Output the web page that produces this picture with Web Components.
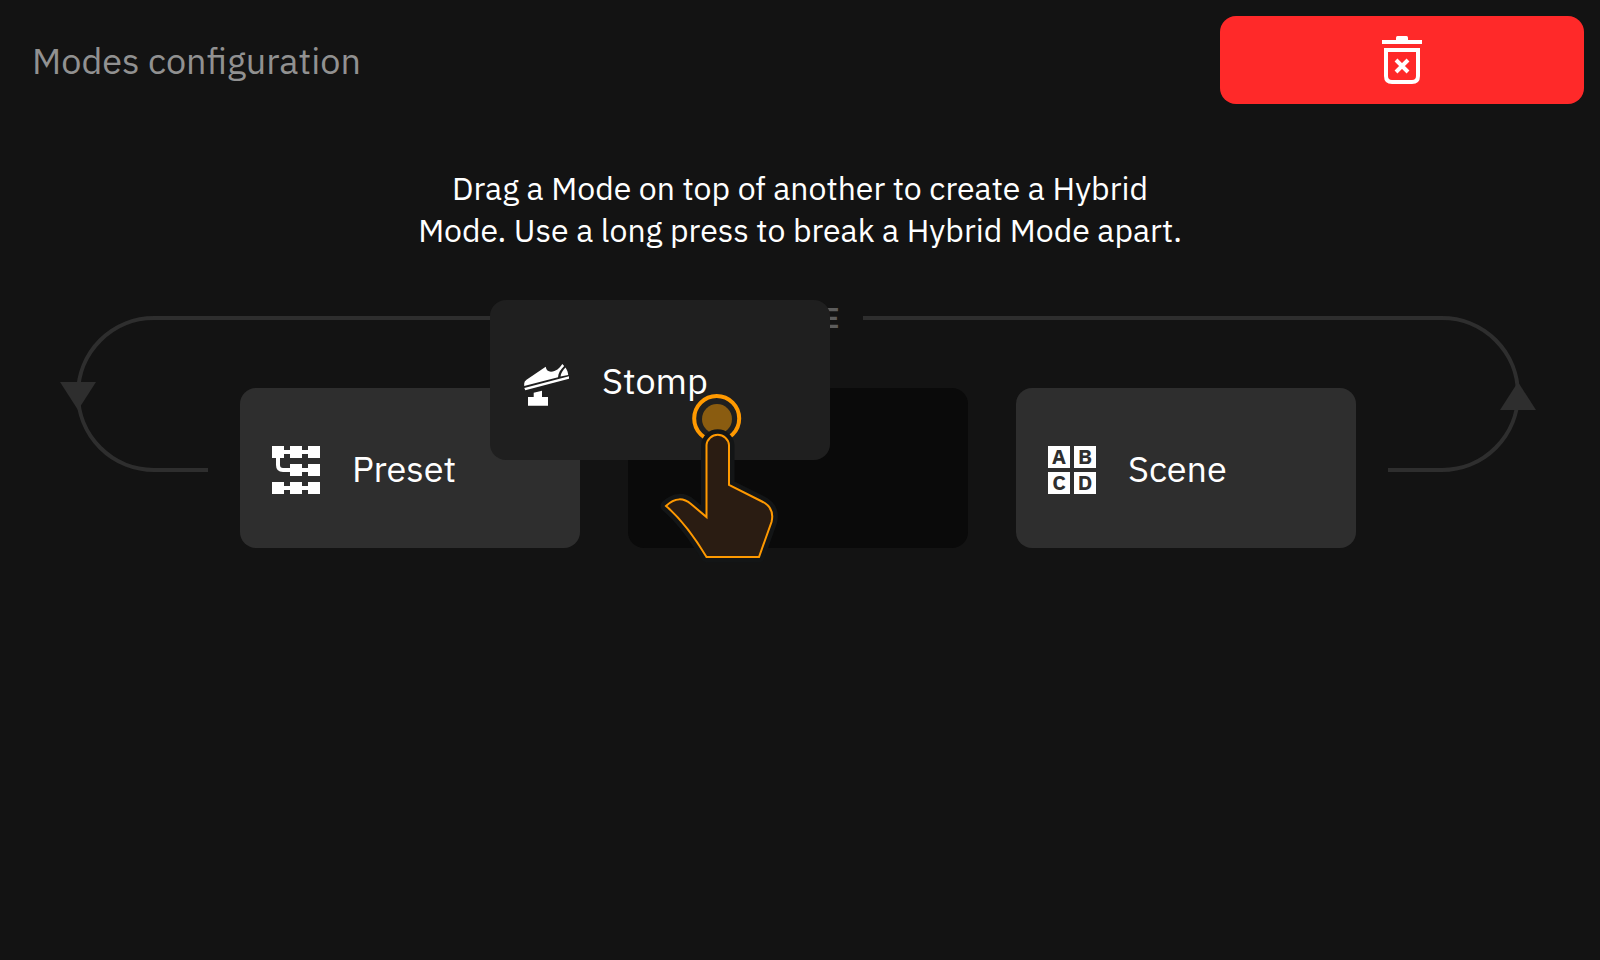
<!DOCTYPE html>
<html lang="en">
<head>
<meta charset="utf-8">
<title>Modes configuration</title>
<style>
  body {
    margin: 0;
    background: #131313;
    color: #fff;
    font-family: "IBM Plex Sans", "Open Sans", "Noto Sans", sans-serif;
  }

  svg {
    overflow: visible;
  }
</style>
</head>
<body>
<modes-page>
  <page-header slot="header" heading="Modes configuration">
    <delete-button></delete-button>
  </page-header>
  <span slot="hint">Drag a Mode on top of another to create a Hybrid<br>Mode. Use a long press to break a Hybrid Mode apart.</span>
  <mode-loop slot="loop" label="MODE">
    <mode-card label="Preset">
      <svg width="48" height="48" viewBox="0 0 48 48" fill="#fff" aria-hidden="true">
        <path d="M0 0h12v12H0zM18 0h12v12H18zM36 0h12v12H36zM18 18h12v12H18zM36 18h12v12H36zM0 36h12v12H0zM18 36h12v12H18zM36 36h12v12H36z"/>
        <path d="M12 6h24M18 24h18M12 42h24M6 12v7q0 5 5 5h7" fill="none" stroke="#fff" stroke-width="4"/>
      </svg>
    </mode-card>
    <mode-slot>
      <mode-card label="Stomp" dragging>
        <svg width="48" height="48" viewBox="0 0 48 48" fill="#fff" aria-hidden="true">
          <path d="M2.200 28V25.500Q2.200 23.500 4.500 21.800L23.700 8.700Q24.500 13.500 29 13.700C34 13.500 37.500 10.500 40.300 6L42.200 8C38.500 11.500 36.300 15 36 19.200Z"/>
          <path d="M43.500 9.500C45.200 12 46 14.500 46.200 17L38.500 18.600C38.800 15 41 12 43.500 9.500Z"/>
          <path d="M2.300 30L47 18.300V20.700L3.300 32.300ZM11.700 34.700L20 32.700V39H26V47.700H6V39H11.700Z"/>
        </svg>
      </mode-card>
      <touch-hand></touch-hand>
    </mode-slot>
    <mode-card label="Scene">
      <svg width="48" height="48" viewBox="0 0 48 48" fill="#fff" aria-hidden="true">
        <path d="M0 0h22v22H0zM26 0h22v22H26zM0 26h22v22H0zM26 26h22v22H26z"/>
        <g fill="#2e2e2e" font-size="21" font-weight="700" text-anchor="middle">
          <text x="11" y="18">A</text>
          <text x="37" y="18">B</text>
          <text x="11" y="44">C</text>
          <text x="37" y="44">D</text>
        </g>
      </svg>
    </mode-card>
  </mode-loop>
</modes-page>

<script>
// page shell: header, hint, loop
class ModesPage extends HTMLElement {
  constructor() {
    super();
    this.attachShadow({mode: 'open'});
    this.shadowRoot.innerHTML = `
      <style>
        :host {
          display: block;
          min-height: 100vh;
        }

        .hint {
          font-size: 32px;
          line-height: 42px;
          margin: 0;
          padding: 63px 16px 51px;
          text-align: center;
        }
      </style>
      <slot name="header"></slot>
      <main>
        <p class="hint"><slot name="hint"></slot></p>
        <slot name="loop"></slot>
      </main>
    `;
  }
}

// title on the left, actions on the right
class PageHeader extends HTMLElement {
  constructor() {
    super();
    this.attachShadow({mode: 'open'});
    this.shadowRoot.innerHTML = `
      <style>
        :host {
          align-items: center;
          display: flex;
          justify-content: space-between;
          padding: 16px 16px 0 32px;
        }

        h1 {
          color: #919191;
          font-size: 36px;
          font-weight: 400;
          line-height: 48px;
          margin: 0;
          padding-top: 2px;
        }
      </style>
      <h1></h1>
      <slot></slot>
    `;
    this.shadowRoot.querySelector('h1').textContent = this.getAttribute('heading');
  }
}

class DeleteButton extends HTMLElement {
  constructor() {
    super();
    this.attachShadow({mode: 'open'});
    this.shadowRoot.innerHTML = `
      <style>
        :host {
          display: block;
          flex: 0 1 364px;
        }

        button {
          align-items: center;
          background: #ff2929;
          border: none;
          border-radius: 16px;
          cursor: pointer;
          display: flex;
          height: 88px;
          justify-content: center;
          padding: 0;
          width: 100%;
        }
      </style>
      <button type="button" aria-label="Delete">
        <svg width="48" height="48" viewBox="0 0 48 48" fill="none" stroke="#fff" stroke-width="4" aria-hidden="true">
          <path d="M4 6H44"/>
          <path d="M18 5V1.500Q18 0 19.500 0H28.500Q30 0 30 1.500V5Z" fill="#fff" stroke="none"/>
          <path d="M8 14H40V40Q40 46 34 46H14Q8 46 8 40Z"/>
          <path d="M18 24L30 36M30 24L18 36"/>
        </svg>
      </button>
    `;
  }
}

// row of cards with the line that runs round it
class ModeLoop extends HTMLElement {
  constructor() {
    super();
    this.attachShadow({mode: 'open'});
    this.shadowRoot.innerHTML = `
      <style>
        :host {
          display: grid;
          grid-template-columns: 148px 1fr 152px;
          padding: 0 60px;
        }

        .top {
          align-items: center;
          display: flex;
          gap: 24px;
          height: 32px;
          /* the side columns differ by 4px, keep the label on the page centre */
          margin-right: -4px;
        }

        .top::before,
        .top::after {
          background: #2e2e2e;
          content: '';
          flex: 1;
          height: 4px;
        }

        .label {
          color: #5c5c5c;
          font-size: 28px;
          font-weight: 600;
          line-height: 32px;
        }

        .cards {
          display: grid;
          gap: 48px;
          grid-template-columns: repeat(3, 1fr);
          padding: 54px 32px 0;
        }

        svg {
          display: block;
        }
      </style>
      <svg width="148" height="176" viewBox="0 0 148 176" fill="none" stroke="#2e2e2e" stroke-width="4" aria-hidden="true">
        <path d="M148 16H94A76 76 0 0 0 94 168H148"/>
        <path d="M0 80H36L18 108Z" fill="#2e2e2e" stroke="none"/>
      </svg>
      <div>
        <div class="top"><span class="label"></span></div>
        <div class="cards"><slot></slot></div>
      </div>
      <svg width="152" height="176" viewBox="0 0 152 176" fill="none" stroke="#2e2e2e" stroke-width="4" aria-hidden="true">
        <path d="M0 16H54A76 76 0 0 1 54 168H0"/>
        <path d="M112 108H148L130 80Z" fill="#2e2e2e" stroke="none"/>
      </svg>
    `;
    this.shadowRoot.querySelector('.label').textContent = this.getAttribute('label');
  }
}

class ModeCard extends HTMLElement {
  constructor() {
    super();
    this.attachShadow({mode: 'open'});
    this.shadowRoot.innerHTML = `
      <style>
        :host {
          align-items: center;
          background: #2e2e2e;
          border-radius: 16px;
          box-sizing: border-box;
          display: flex;
          font-size: 36px;
          gap: 32px;
          height: 160px;
          line-height: 48px;
          padding: 4px 32px 0;
        }

        /* lifted off its slot while dragged */
        :host([dragging]) {
          background: #1f1f1f;
          left: -138px;
          position: absolute;
          top: -88px;
          width: 100%;
        }

        .label {
          padding-bottom: 2px;
        }
      </style>
      <slot></slot>
      <span class="label"></span>
    `;
    this.shadowRoot.querySelector('.label').textContent = this.getAttribute('label');
  }
}

// empty place the dragged card came from
class ModeSlot extends HTMLElement {
  constructor() {
    super();
    this.attachShadow({mode: 'open'});
    this.shadowRoot.innerHTML = `
      <style>
        :host {
          background: #0a0a0a;
          border-radius: 16px;
          display: block;
          height: 160px;
          position: relative;
        }
      </style>
      <slot></slot>
    `;
  }
}

class TouchHand extends HTMLElement {
  constructor() {
    super();
    this.attachShadow({mode: 'open'});
    this.shadowRoot.innerHTML = `
      <style>
        :host {
          display: block;
          left: 12px;
          pointer-events: none;
          position: absolute;
          top: -8px;
        }

        svg {
          display: block;
        }
      </style>
      <svg width="160" height="190" viewBox="0 0 160 190" aria-hidden="true">
        <circle cx="76.700" cy="38.500" r="22.500" fill="none" stroke="#f90" stroke-width="4"/>
        <circle cx="77" cy="39" r="15" fill="#8a5c10"/>
        <path d="M66.500 137V65A11.300 11.300 0 0 1 89 65V105L122 121.500Q135 128 131.500 142L119 177H66.500Q46 143 26 126C35 117 44 118 51 124Z" fill="#2a1c12" stroke="#131516" stroke-width="11" stroke-linejoin="round"/>
        <path d="M66.500 137V65A11.300 11.300 0 0 1 89 65V105L122 121.500Q135 128 131.500 142L119 177H66.500Q46 143 26 126C35 117 44 118 51 124Z" fill="#2a1c12" stroke="#f90" stroke-width="2"/>
      </svg>
    `;
  }
}

customElements.define('modes-page', ModesPage);
customElements.define('page-header', PageHeader);
customElements.define('delete-button', DeleteButton);
customElements.define('mode-loop', ModeLoop);
customElements.define('mode-card', ModeCard);
customElements.define('mode-slot', ModeSlot);
customElements.define('touch-hand', TouchHand);
</script>
</body>
</html>
